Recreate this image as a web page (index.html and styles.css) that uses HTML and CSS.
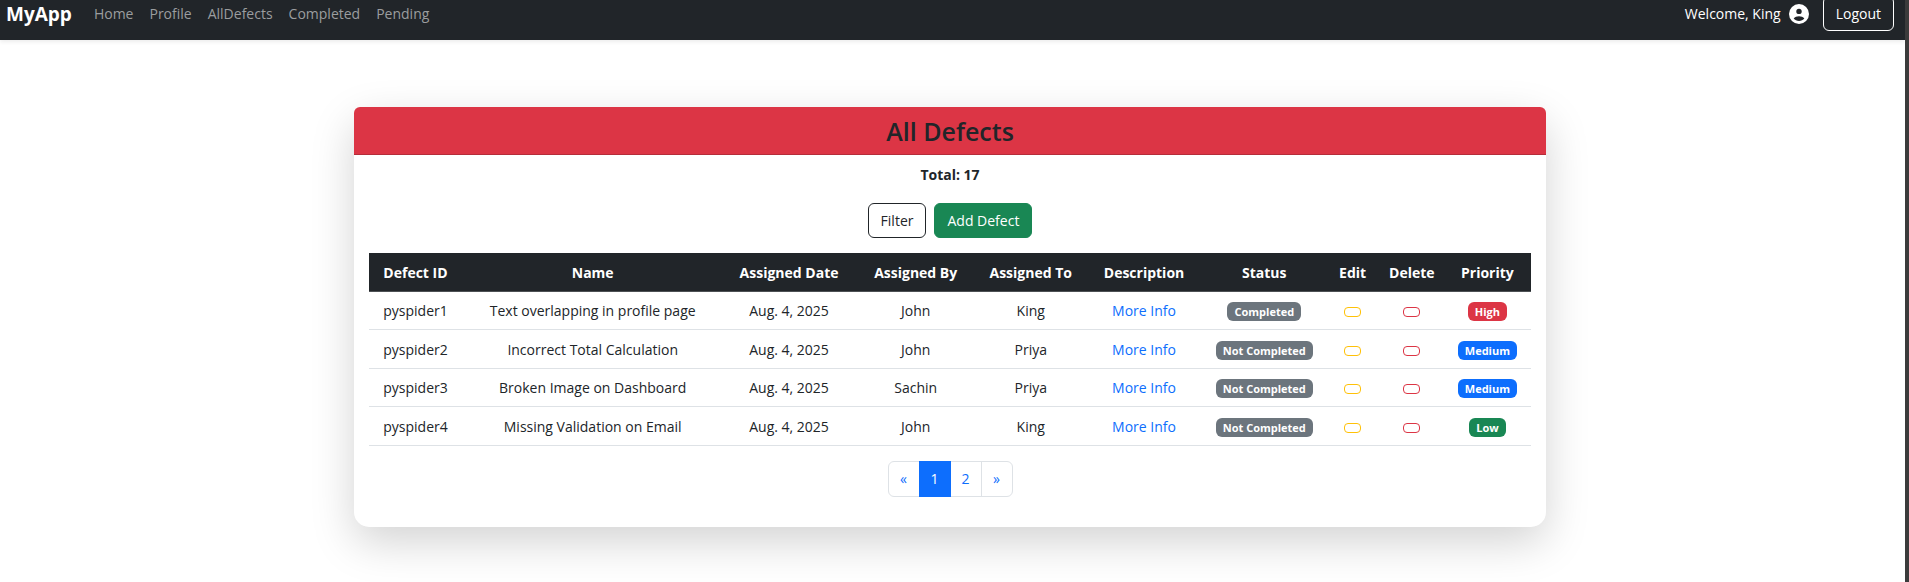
FILE: index.html
```
<!DOCTYPE html>
<html lang="en">
<head>
<meta charset="utf-8">
<title>All Defects</title>
<link rel="stylesheet" href="styles.css">
</head>
<body>
<nav class="navbar">
  <a class="brand" href="#">MyApp</a>
  <div class="nav-links">
    <a href="#">Home</a>
    <a href="#">Profile</a>
    <a href="#">AllDefects</a>
    <a href="#">Completed</a>
    <a href="#">Pending</a>
  </div>
  <div class="account">
    <span>Welcome, King</span>
    <svg class="avatar" viewBox="0 0 20 20" aria-hidden="true">
      <circle cx="10" cy="10" r="10" fill="#fff"/>
      <circle cx="10" cy="7.4" r="2.7" fill="#212529"/>
      <path d="M4.7 14.6C5.7 12.9 8 12.2 10 12.2s4.3.7 5.3 2.4C14.1 16.200 12.200 17.100 10 17.100s-4.100-.9-5.300-2.500z" fill="#212529"/>
    </svg>
    <button class="btn btn-light" type="button">Logout</button>
  </div>
</nav>
<main class="page">
  <section class="card">
    <h1 class="card-title">All Defects</h1>
    <div class="card-body">
      <p class="total">Total: 17</p>
      <div class="actions">
        <button class="btn btn-dark" type="button">Filter</button>
        <button class="btn btn-success" type="button">Add Defect</button>
      </div>
      <table class="defects">
        <colgroup>
          <col class="col-id"><col class="col-name"><col class="col-date"><col class="col-by"><col class="col-to">
          <col class="col-desc"><col class="col-status"><col class="col-edit"><col class="col-delete"><col class="col-priority">
        </colgroup>
        <thead>
          <tr><th>Defect ID</th><th>Name</th><th>Assigned Date</th><th>Assigned By</th><th>Assigned To</th><th>Description</th><th>Status</th><th>Edit</th><th>Delete</th><th>Priority</th></tr>
        </thead>
        <tbody>
          <tr><td>pyspider1</td><td>Text overlapping in profile page</td><td>Aug. 4, 2025</td><td>John</td><td>King</td><td><a href="#">More Info</a></td><td><span class="badge gray">Completed</span></td><td><button class="mini edit" type="button" aria-label="Edit"></button></td><td><button class="mini delete" type="button" aria-label="Delete"></button></td><td><span class="badge red">High</span></td></tr>
          <tr><td>pyspider2</td><td>Incorrect Total Calculation</td><td>Aug. 4, 2025</td><td>John</td><td>Priya</td><td><a href="#">More Info</a></td><td><span class="badge gray">Not Completed</span></td><td><button class="mini edit" type="button" aria-label="Edit"></button></td><td><button class="mini delete" type="button" aria-label="Delete"></button></td><td><span class="badge blue">Medium</span></td></tr>
          <tr><td>pyspider3</td><td>Broken Image on Dashboard</td><td>Aug. 4, 2025</td><td>Sachin</td><td>Priya</td><td><a href="#">More Info</a></td><td><span class="badge gray">Not Completed</span></td><td><button class="mini edit" type="button" aria-label="Edit"></button></td><td><button class="mini delete" type="button" aria-label="Delete"></button></td><td><span class="badge blue">Medium</span></td></tr>
          <tr><td>pyspider4</td><td>Missing Validation on Email</td><td>Aug. 4, 2025</td><td>John</td><td>King</td><td><a href="#">More Info</a></td><td><span class="badge gray">Not Completed</span></td><td><button class="mini edit" type="button" aria-label="Edit"></button></td><td><button class="mini delete" type="button" aria-label="Delete"></button></td><td><span class="badge green">Low</span></td></tr>
        </tbody>
      </table>
      <nav class="pagination" aria-label="Pages">
        <a href="#">«</a>
        <a class="active" href="#">1</a>
        <a href="#">2</a>
        <a href="#">»</a>
      </nav>
    </div>
  </section>
</main>
</body>
</html>
```

FILE: styles.css
```
* {
  box-sizing: border-box;
}

html {
  min-height: 100vh;
  border-right: 4px solid #3b3b3b;
  background: #fff;
}

body {
  margin: 0;
  font-family: "Segoe UI", "Open Sans", "Noto Sans", sans-serif;
  font-size: 14px;
  line-height: 22px;
  color: #212529;
}

a {
  color: #0d6efd;
  text-decoration: none;
}

/* The bar is scrolled partly out of view */
.navbar {
  display: flex;
  align-items: center;
  margin-top: -13px;
  padding: 9px 11px 9px 6px;
  background: #212529;
  color: #fff;
  box-shadow: 0 2px 4px rgba(0, 0, 0, 0.075);
}

.brand {
  margin-right: 22px;
  color: #fff;
  font-size: 19px;
  font-weight: 700;
}

.nav-links {
  display: flex;
  gap: 16px;
}

.nav-links a {
  color: #9b9d9f;
}

.account {
  display: flex;
  align-items: center;
  margin-left: auto;
}

.avatar {
  width: 20px;
  height: 20px;
  margin: 0 14px 0 8px;
}

.btn {
  height: 35px;
  padding: 0 12px;
  border: 1px solid;
  border-radius: 6px;
  background: transparent;
  font: inherit;
}

.btn-light {
  border-color: #fff;
  color: #fff;
}

.btn-dark {
  border-color: #212529;
  color: #212529;
}

.btn-success {
  border-color: #198754;
  background: #198754;
  color: #fff;
}

.page {
  padding: 67px 17px 55px 12px;
}

.card {
  max-width: 1192px;
  margin: 0 auto;
  border-radius: 15px;
  background: #fff;
  box-shadow: 0 15px 44px rgba(0, 0, 0, 0.175);
  text-align: center;
}

.card-title {
  margin: 0;
  padding: 8px 15px 7px;
  border-bottom: 1px solid #b52d3a;
  border-radius: 6px 6px 0 0;
  background: #dc3545;
  font-size: 25px;
  font-weight: 600;
  line-height: 32px;
}

.card-body {
  padding: 9px 15px 30px;
}

.total {
  margin: 0 0 17px;
  font-weight: 700;
}

.actions {
  display: flex;
  justify-content: center;
  gap: 8px;
  margin-bottom: 15px;
}

.defects {
  width: 100%;
  margin-bottom: 15px;
  border-collapse: separate;
  border-spacing: 0;
  table-layout: fixed;
}

.col-id { width: 8%; }
.col-name { width: 22.5%; }
.col-date { width: 11.3%; }
.col-by { width: 10.5%; }
.col-to { width: 9.3%; }
.col-desc { width: 10.2%; }
.col-status { width: 10.5%; }
.col-edit { width: 4.7%; }
.col-delete { width: 5.5%; }
.col-priority { width: 7.5%; }

.defects th {
  height: 39px;
  padding: 1px 0 0;
  border-bottom: 1px solid #4d5154;
  background: #212529;
  color: #fff;
  font-weight: 700;
  white-space: nowrap;
}

.defects td {
  height: 38px;
  padding: 0;
  border-bottom: 1px solid #dee2e6;
  white-space: nowrap;
}

.defects tr:nth-child(even) td {
  height: 39px;
  padding-top: 1px;
}

.badge {
  display: inline-block;
  padding: 4px 7px;
  border-radius: 6px;
  color: #fff;
  font-size: 11px;
  font-weight: 700;
  line-height: 11px;
  vertical-align: middle;
}

.gray { background: #6c757d; }
.red { background: #dc3545; }
.blue { background: #0d6efd; }
.green { background: #198754; }

.mini {
  width: 17px;
  height: 10px;
  padding: 0;
  border: 1px solid;
  border-radius: 4px;
  background: transparent;
  vertical-align: middle;
}

.edit { border-color: #ffc107; }
.delete { border-color: #dc3545; }

.pagination {
  display: flex;
  justify-content: center;
}

.pagination a {
  width: 32px;
  margin-left: -1px;
  padding: 6px 0;
  border: 1px solid #dee2e6;
  line-height: 22px;
}

.pagination a:first-child {
  margin-left: 0;
  border-radius: 6px 0 0 6px;
}

.pagination a:last-child {
  border-radius: 0 6px 6px 0;
}

.pagination .active {
  z-index: 1;
  border-color: #0d6efd;
  background: #0d6efd;
  color: #fff;
}
```
